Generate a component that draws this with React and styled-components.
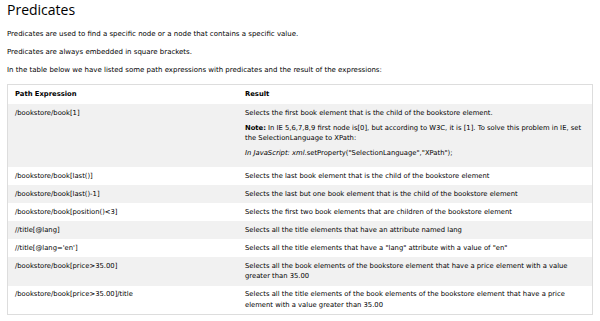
import React from "react";
import styled, { createGlobalStyle } from "styled-components";

const Global = createGlobalStyle`
  html, body { margin: 0; padding: 0; background: #fff; }
  body { font-family: "DejaVu Sans", Verdana, sans-serif; color: #000; }
`;

const Page = styled.div`
  padding: 0 7px;
  width: 600px;
  box-sizing: border-box;
`;

const Title = styled.h1`
  font-family: "Open Sans", "Noto Sans", sans-serif;
  font-weight: 400;
  font-size: 14px;
  line-height: 20px;
  margin: 0 0 10px 0;
  color: #000;
`;

const Para = styled.p`
  font-size: 7px;
  line-height: 9px;
  margin: 0 0 9px 0;
`;

const Table = styled.table`
  border-collapse: collapse;
  width: 586px;
  border: 1px solid #ddd;
  font-size: 6.8px;
  line-height: 10.5px;
  margin-top: 9px;
`;

const Row = styled.tr`
  background: ${(p) => (p.$shade ? "#f1f1f1" : "#fff")};
`;

const Cell = styled.td`
  padding: 3.75px 3px 3.75px 7px;
  vertical-align: top;
  text-align: left;
  width: ${(p) => p.$w || "auto"};
`;

const Head = styled(Cell).attrs({ as: "th" })`
  font-weight: 700;
  padding-top: 4.25px;
  padding-bottom: 4.25px;
`;

const CellPara = styled.p`
  margin: 0 0 4.5px 0;
`;

const rows = [
  ["/bookstore/book[last()]", "Selects the last book element that is the child of the bookstore element"],
  ["/bookstore/book[last()-1]", "Selects the last but one book element that is the child of the bookstore element"],
  ["/bookstore/book[position()<3]", "Selects the first two book elements that are children of the bookstore element"],
  ["//title[@lang]", "Selects all the title elements that have an attribute named lang"],
  ["//title[@lang='en']", "Selects all the title elements that have a \"lang\" attribute with a value of \"en\""],
  ["/bookstore/book[price>35.00]", "Selects all the book elements of the bookstore element that have a price element with a value greater than 35.00"],
  ["/bookstore/book[price>35.00]/title", "Selects all the title elements of the book elements of the bookstore element that have a price element with a value greater than 35.00"],
];

export default function App() {
  return (
    <Page>
      <Global />
      <Title>Predicates</Title>
      <Para>Predicates are used to find a specific node or a node that contains a specific value.</Para>
      <Para>Predicates are always embedded in square brackets.</Para>
      <Para>In the table below we have listed some path expressions with predicates and the result of the expressions:</Para>
      <Table>
        <tbody>
          <Row>
            <Head $w="220px">Path Expression</Head>
            <Head>Result</Head>
          </Row>
          <Row $shade>
            <Cell>/bookstore/book[1]</Cell>
            <Cell>
              <CellPara>Selects the first book element that is the child of the bookstore element.</CellPara>
              <CellPara>
                <b>Note:</b> In IE 5,6,7,8,9 first node is[0], but according to W3C, it is [1]. To solve this problem in IE, set the SelectionLanguage to XPath:
              </CellPara>
              <CellPara>
                <i>In JavaScript: xml</i>.setProperty("SelectionLanguage","XPath");
              </CellPara>
            </Cell>
          </Row>
          {rows.map(([a, b], i) => (
            <Row key={a} $shade={i % 2 === 1}>
              <Cell>{a}</Cell>
              <Cell>{b}</Cell>
            </Row>
          ))}
        </tbody>
      </Table>
    </Page>
  );
}
